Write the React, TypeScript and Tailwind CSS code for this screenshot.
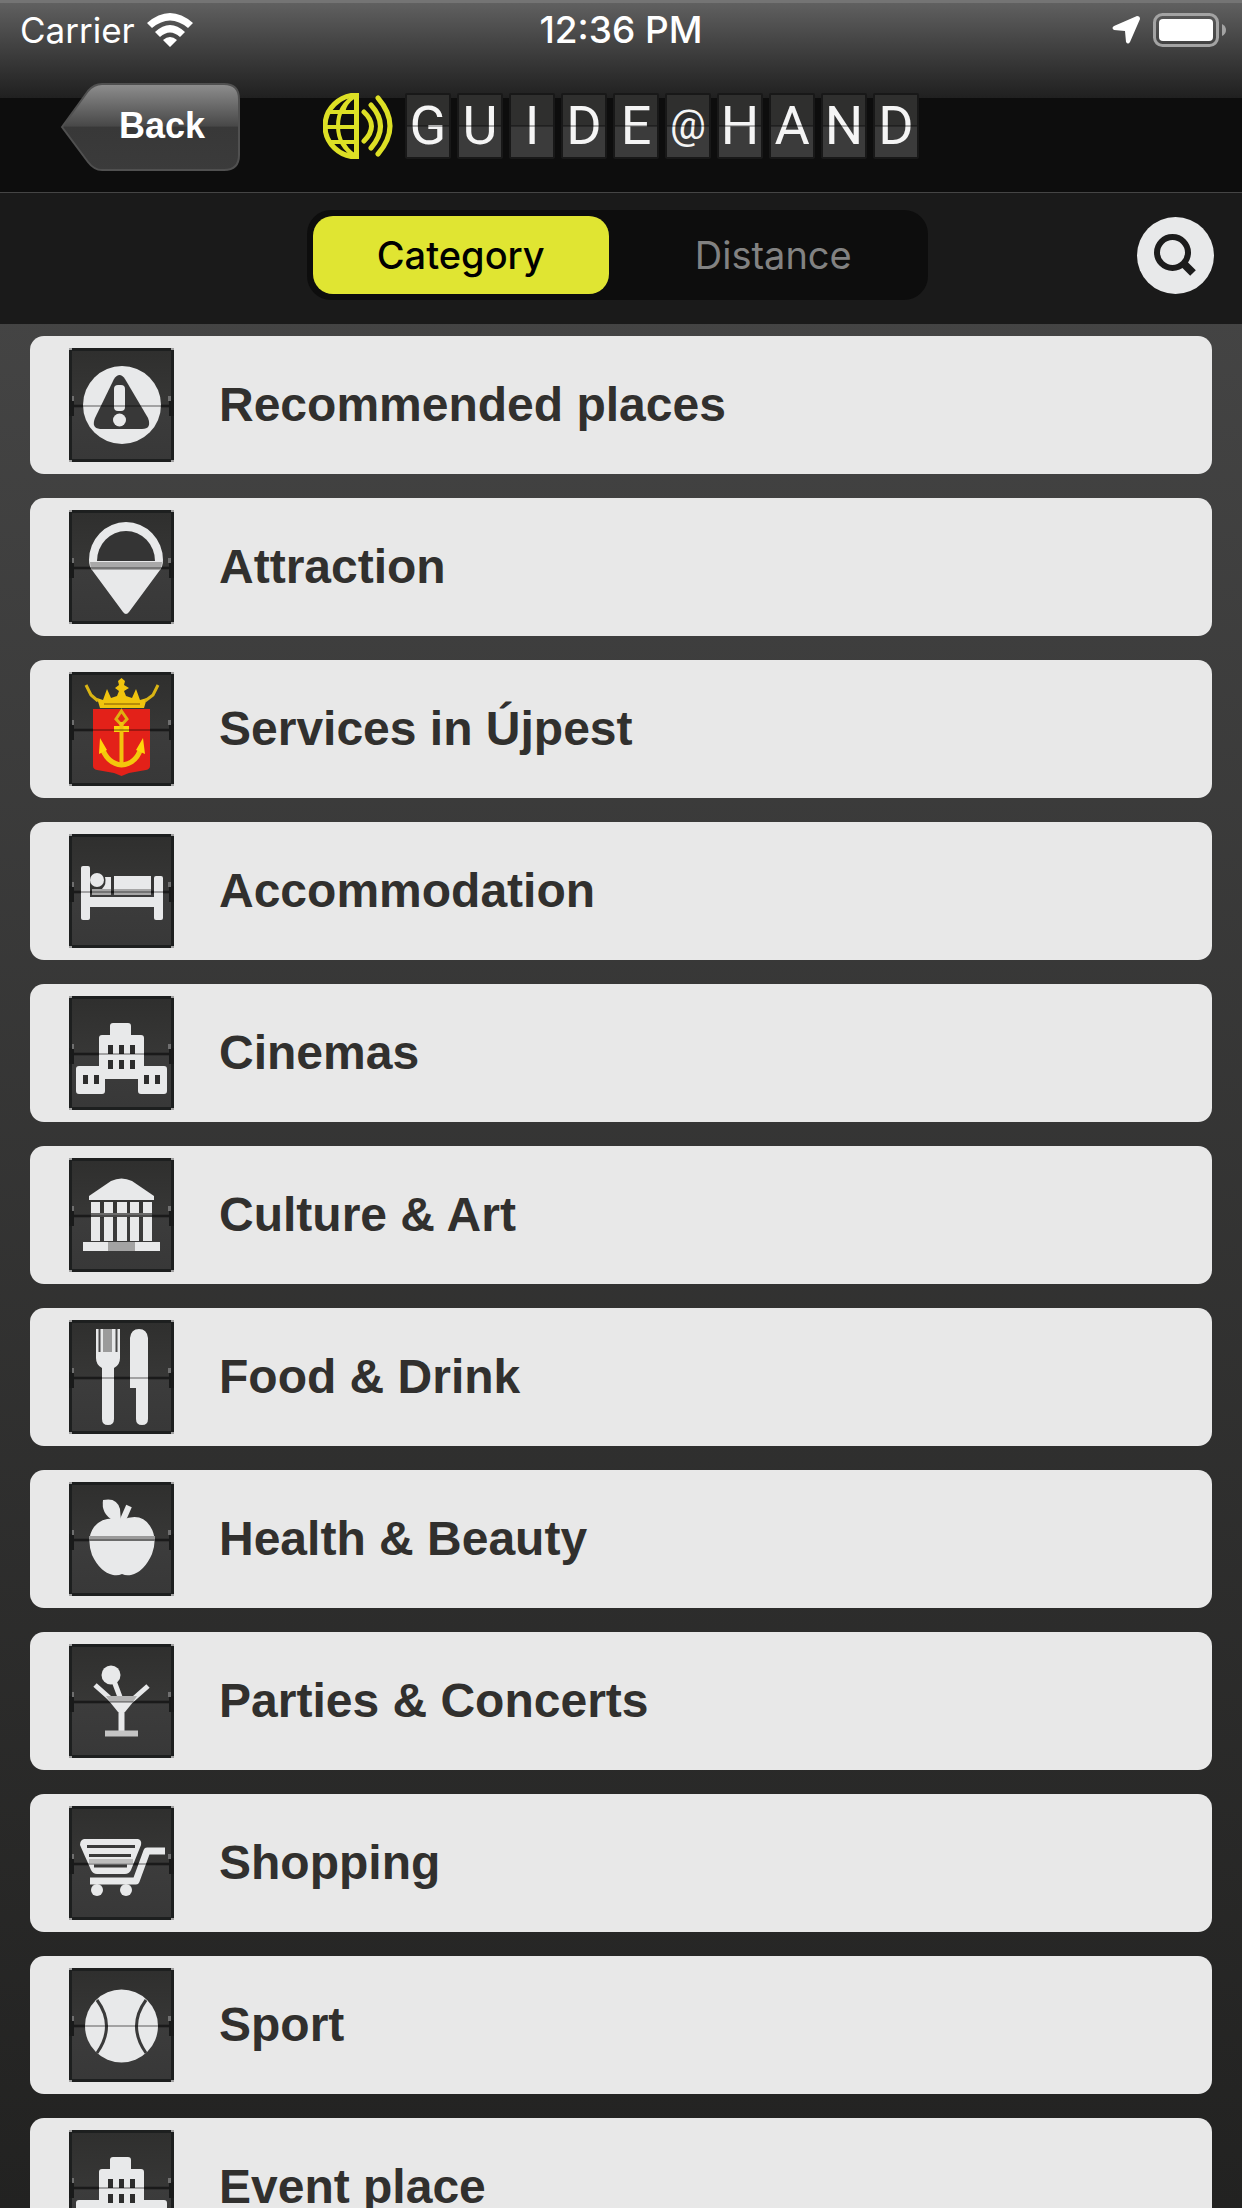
import { useState } from "react";
import type { ReactNode } from "react";
import clsx from "clsx";

type Category = { id: number; name: string; icon: ReactNode };

const LIGHT = "#e8e9ea";
const DARK = "#343434";

function WarningIcon() {
  return (
    <>
      <circle cx="53" cy="57" r="39" fill={LIGHT} />
      <path d="M45 31Q50.5 23 56 31L79 70Q83 81 73 81H31Q22 80 26 70Z" fill="#383838" />
      <rect x="45" y="37" width="11" height="26" rx="4" fill={LIGHT} />
      <circle cx="50.5" cy="72" r="6.5" fill={LIGHT} />
    </>
  );
}

function PinIcon() {
  return (
    <>
      <path d="M20 50a37 38 0 0 1 74 0q0 6-3 10L60 102q-3 4-6 0L23 60q-3-4-3-10Z" fill={LIGHT} />
      <path d="M28 51a29 30 0 0 1 58 0Z" fill={DARK} />
      <path d="M21 52H93Q93 56 91 60H23Q21 56 21 52Z" fill="#a9a9a9" />
    </>
  );
}

function CrestIcon() {
  return (
    <>
      <path d="M24 37H81V94Q81 97 77 98L60 101L52.5 104L45 101L28 98Q24 97 24 94Z" fill="#e32119" />
      <path
        d="M28 26L34 28L38 17L42 26L48 24L50 19L46 16L50 13L49 9L52.5 6L56 9L55 13L60 16L55 19L57 24L63 26L67 17L71 28L78 26L75 36H31Z"
        fill="#f0c40e"
      />
      <path d="M17 13L22 23L29 29M89 13L84 23L76 29" stroke="#d9b414" strokeWidth="3" fill="none" />
      <path d="M35 32H71" stroke="#b98d08" strokeWidth="2" />
      <path d="M52.5 39L58 47L52.5 53L47 47Z" fill="none" stroke="#e0b010" strokeWidth="3" />
      <rect x="45" y="54" width="15" height="6" fill="#ffd60a" />
      <path d="M52.5 50V92" stroke="#f2c40d" strokeWidth="4" />
      <path d="M33 76Q39 92 52.5 93Q67 92 72 76" fill="none" stroke="#f4c80c" strokeWidth="5" />
      <path d="M31 66L38 78L30 82ZM74 66L67 78L76 82Z" fill="#ffd60a" />
    </>
  );
}

function BedIcon() {
  return (
    <g fill={LIGHT}>
      <rect x="12" y="32" width="9" height="54" rx="2" />
      <rect x="85" y="42" width="9" height="44" rx="2" />
      <rect x="12" y="63" width="82" height="10" />
      <path d="M23 55H42V61H23ZM45 55H82V61H45Z" fill="#a6a6a6" />
      <circle cx="28" cy="46" r="7" />
      <path d="M36 43H42V55H33Q38 50 36 43ZM45 42H82V55H45Z" />
    </g>
  );
}

function BuildingIcon() {
  return (
    <>
      <path
        d="M44 27H59Q62 27 62 30V39H72Q75 39 75 42V70H95Q98 70 98 73V95Q98 98 95 98H72Q69 98 69 95V83H36V95Q36 98 33 98H10Q7 98 7 95V73Q7 70 10 70H30V42Q30 39 33 39H41V30Q41 27 44 27Z"
        fill={LIGHT}
      />
      <path
        d="M39 49h5v9h-5zM50 49h5v9h-5zM61 49h5v9h-5zM39 64h5v9h-5zM50 64h5v9h-5zM61 64h5v9h-5zM14 79h5v9h-5zM25 79h5v9h-5zM75 79h5v9h-5zM86 79h5v9h-5z"
        fill="#2d2d2d"
      />
    </>
  );
}

function MuseumIcon() {
  return (
    <g fill={LIGHT}>
      <path d="M20 38L42 23Q52.5 18 63 23L85 38V42H20Z" />
      <path d="M22 44h9v39h-9zM35 44h9v39h-9zM48 44h10v39h-10zM61 44h9v39h-9zM74 44h9v39h-9z" />
      <path d="M22 55H83V59H22Z" fill="#6b6b6b" />
      <path d="M14 84H91V93H14Z" />
      <path d="M39 84H66V93H39Z" fill="#a3a3a3" />
    </g>
  );
}

function CutleryIcon() {
  return (
    <g fill={LIGHT}>
      <path d="M27 9H51V38Q51 45 45 48V99Q45 105 39 105T33 99V48Q27 45 27 38Z" />
      <path d="M29.500 9h2v23h-2zM46.500 9h2v23h-2z" fill="#4a4a4a" />
      <path d="M34 9h9v23h-9z" fill="#9b9b9b" />
      <path d="M61 18Q62 9 70 9T79 18V99Q79 105 73 105T67 99V68H61Z" />
    </g>
  );
}

function AppleIcon() {
  return (
    <>
      <path
        d="M53 38Q72 30 81 44Q89 56 83 72Q75 90 62 93Q57 94 53 92Q49 94 44 93Q31 90 23 73Q17 56 25 45Q35 33 53 38Z"
        fill={LIGHT}
      />
      <path d="M53 40L60 24" fill="none" stroke={LIGHT} strokeWidth="6" />
      <path d="M34 18Q48 15 51 27L52 40L44 38Q32 32 34 18Z" fill={LIGHT} />
      <path d="M20 54H86V59H20Z" fill="#9a9a9a" />
    </>
  );
}

function CocktailIcon() {
  return (
    <>
      <circle cx="42" cy="31" r="9.500" fill={LIGHT} />
      <path d="M45 37L51 53M26 41L44 57M79 42L62 57" stroke={LIGHT} strokeWidth="5" fill="none" />
      <path d="M36 52H69L56 68H49Z" fill={LIGHT} />
      <path d="M37 52H68L64 58H41Z" fill="#b4b4b4" />
      <path d="M52.500 64V88" stroke={LIGHT} strokeWidth="6" />
      <path d="M36 89.500H69" stroke="#c4c4c4" strokeWidth="6" />
    </>
  );
}

function CartIcon() {
  return (
    <>
      <path d="M15 33H69Q73 34 72 39L62 64Q60 68 56 68H28Q24 68 22 64L11 39Q11 34 15 33Z" fill={LIGHT} />
      <path d="M18 40.500H66M20 49.500H62M25 60H58" stroke="#3a3a3a" strokeWidth="3" fill="none" />
      <path d="M20 55H64" stroke="#bdbdbd" strokeWidth="4" />
      <path d="M21 75H67L78 45H96" fill="none" stroke={LIGHT} strokeWidth="7" strokeLinejoin="round" />
      <circle cx="28" cy="84" r="6" fill={LIGHT} />
      <circle cx="57" cy="84" r="6" fill={LIGHT} />
    </>
  );
}

function BallIcon() {
  return (
    <>
      <circle cx="52.500" cy="58" r="36.500" fill={LIGHT} />
      <path d="M28 32Q47 58 28 85M77 32Q58 58 77 85" fill="none" stroke="#3a3a3a" strokeWidth="3" />
    </>
  );
}

const CATEGORIES: Category[] = [
  { id: 1, name: "Recommended places", icon: <WarningIcon /> },
  { id: 2, name: "Attraction", icon: <PinIcon /> },
  { id: 3, name: "Services in Újpest", icon: <CrestIcon /> },
  { id: 4, name: "Accommodation", icon: <BedIcon /> },
  { id: 5, name: "Cinemas", icon: <BuildingIcon /> },
  { id: 6, name: "Culture & Art", icon: <MuseumIcon /> },
  { id: 7, name: "Food & Drink", icon: <CutleryIcon /> },
  { id: 8, name: "Health & Beauty", icon: <AppleIcon /> },
  { id: 9, name: "Parties & Concerts", icon: <CocktailIcon /> },
  { id: 10, name: "Shopping", icon: <CartIcon /> },
  { id: 11, name: "Sport", icon: <BallIcon /> },
  { id: 12, name: "Event place", icon: <BuildingIcon /> },
];

// split-flap tile with the hinge line across the middle
function FlapTile({ children }: { children: ReactNode }) {
  return (
    <svg viewBox="0 0 105 114" className="h-[114px] w-[105px] shrink-0" aria-hidden="true">
      <defs>
        <linearGradient id="flap" x1="0" y1="0" x2="0" y2="1">
          <stop offset="0" stopColor="#2f2f2e" />
          <stop offset="0.5" stopColor="#373736" />
          <stop offset="0.51" stopColor="#3c3c3c" />
          <stop offset="1" stopColor="#383838" />
        </linearGradient>
      </defs>
      <rect width="105" height="114" fill="#1d1f1f" />
      <rect x="3" y="3" width="99" height="108" fill="url(#flap)" />
      <path d="M0 0h3v2h-3zM102 0h3v2h-3zM0 112h3v2h-3zM102 112h3v2h-3z" fill="#a0a0a0" />
      <path d="M5 58H100" stroke="#262626" strokeWidth="3" />
      {children}
      <path d="M5 58H100" stroke="#000" strokeOpacity="0.3" strokeWidth="2" />
      <path d="M0 52h5v16h-5zM100 52h5v16h-5z" fill="#191a1a" />
      <path d="M3 48h2v5h-2zM99 48h3v5h-3z" fill="#6f6f6f" />
    </svg>
  );
}

function StatusBar() {
  return (
    <div className="grid h-[60px] grid-cols-[1fr_auto_1fr] items-center px-5 font-[Inter] text-[35px] leading-[44px] text-white">
      <div className="flex items-center gap-3">
        <span>Carrier</span>
        <svg viewBox="0 0 46 34" className="h-[34px] w-[46px]" aria-label="Wi-Fi">
          <path d="M0 10Q23-10 46 10L41 15Q23 0 5 15ZM8 19Q23 5 38 19L33 24Q23 15 13 24ZM16 27Q23 21 30 27L23 34Z" fill="#fff" />
        </svg>
      </div>
      <span className="text-[37px] font-medium">12:36 PM</span>
      <div className="flex items-center justify-end gap-3">
        <svg viewBox="0 0 28 28" className="size-7" aria-label="Location">
          <path d="M25 0Q28 0 28 3L18 26Q16 29 14 26L13 15L2 14Q-1 12 2 10Z" fill="#fff" />
        </svg>
        <svg viewBox="0 0 74 34" className="-mr-1 h-[34px] w-[74px]" aria-label="Battery full">
          <rect x="2.500" y="1.500" width="63" height="31" rx="8" fill="none" stroke="#a3a3a3" strokeWidth="3" />
          <rect x="7" y="6" width="54" height="22" rx="4" fill="#fff" />
          <path d="M70 11Q74 13 74 17T70 23Z" fill="#a3a3a3" />
        </svg>
      </div>
    </div>
  );
}

function Logo() {
  return (
    <div className="flex items-center gap-3" role="img" aria-label="Guide@Hand">
      <svg viewBox="0 0 70 66" className="h-[66px] w-[70px]" fill="none" stroke="#dde025" strokeWidth="4">
        <path d="M34 2A32 31 0 0 0 34 64" strokeWidth="5" />
        <path d="M34 2Q15 12 15 33T34 64M30 4Q22 10 20 19M20 49Q23 57 31 62" />
        <path d="M5 19H33M2 34H33M5 49H33" />
        <path d="M33.500 0V66" strokeWidth="5" />
        <path d="M41 19Q56 33 41 48M48 12Q67 33 48 55M55 5Q79 33 55 61" strokeWidth="5" strokeLinecap="round" />
      </svg>
      <div className="flex gap-[6px]">
        {"GUIDE@HAND".split("").map((letter, i) => (
          <span
            key={i}
            className={clsx(
              "relative flex h-[66px] w-[46px] items-center justify-center rounded-[2px] border-2 border-[#181818] bg-linear-to-b from-[#2f2f2e] from-50% to-[#3b3b3b] to-50% font-[Roboto] leading-[60px] text-[#f5f5f5]",
              letter === "@" ? "text-[40px]" : "text-[54px]"
            )}
          >
            {letter}
            <span className="absolute inset-x-0 top-[30px] h-[2px] bg-black/30" />
          </span>
        ))}
      </div>
    </div>
  );
}

function BackButton() {
  return (
    <button className="relative h-[90px] w-[180px] justify-self-start text-[36px] leading-[44px] font-bold text-white">
      <svg viewBox="0 0 180 90" className="absolute inset-0 size-full" aria-hidden="true">
        <defs>
          <linearGradient id="back" x1="0" y1="0" x2="0" y2="1">
            <stop offset="0" stopColor="#8e8e8e" />
            <stop offset="0.49" stopColor="#484848" />
            <stop offset="0.5" stopColor="#383838" />
            <stop offset="1" stopColor="#3b3b3b" />
          </linearGradient>
        </defs>
        <path d="M2 46L28 10Q34 3 42 3H164Q179 3 179 18V74Q179 89 164 89H42Q34 89 28 81Z" fill="url(#back)" stroke="#505050" strokeWidth="2" />
      </svg>
      <span className="relative pl-6">Back</span>
    </button>
  );
}

export default function App() {
  const [mode, setMode] = useState<"category" | "distance">("category");

  return (
    <div className="flex h-screen flex-col overflow-hidden bg-linear-to-b from-[#4a4a4a] to-[#222221] font-['Liberation_Sans',sans-serif]">
      <header className="shrink-0 border-b border-[#454545] bg-[#0d0d0d]">
        <div className="border-t-[3px] border-[#747474] bg-linear-to-b from-[#606060] to-[#202020] to-[95px] bg-[length:100%_95px] bg-no-repeat">
          <div className="-mt-[3px]">
            <StatusBar />
            <div className="grid h-[132px] grid-cols-[1fr_auto_1fr] items-center px-[60px]">
              <BackButton />
              <Logo />
            </div>
          </div>
        </div>
      </header>

      <div className="grid shrink-0 grid-cols-[1fr_auto_1fr] items-center bg-[#1a1a1a] pt-[17px] pr-7 pb-6 pl-5">
        <div className="col-start-2 grid w-[621px] grid-cols-2 rounded-[24px] bg-[#0d0d0d] p-[6px] font-[Inter] text-[38px] leading-[44px]">
          <button
            aria-pressed={mode === "category"}
            onClick={() => setMode("category")}
            className={clsx("mr-2 h-[78px] rounded-[20px]", mode === "category" ? "bg-[#e0e532] font-medium text-black" : "text-[#828282]")}
          >
            Category
          </button>
          <button
            aria-pressed={mode === "distance"}
            onClick={() => setMode("distance")}
            className={clsx("ml-2 h-[78px] rounded-[20px]", mode === "distance" ? "bg-[#e0e532] font-medium text-black" : "text-[#828282]")}
          >
            Distance
          </button>
        </div>
        <button aria-label="Search" className="size-[77px] justify-self-end rounded-full bg-[#e8e9ea]">
          <svg viewBox="0 0 77 77" className="size-full" fill="none" stroke="#1c1c1c">
            <circle cx="35.500" cy="35.500" r="15.500" strokeWidth="6" />
            <path d="M46 46L56 56" strokeWidth="8" />
          </svg>
        </button>
      </div>

      <ul className="flex min-h-0 grow flex-col gap-6 overflow-hidden px-[30px] pt-3">
        {CATEGORIES.map((c) => (
          <li key={c.id} className="shrink-0">
            <a href="#" className="flex h-[138px] items-center gap-[45px] rounded-[14px] bg-[#e8e8e8] px-[39px] text-[48px] leading-[56px] font-bold text-[#31302e]">
              <FlapTile>{c.icon}</FlapTile>
              <span>{c.name}</span>
            </a>
          </li>
        ))}
      </ul>
    </div>
  );
}
